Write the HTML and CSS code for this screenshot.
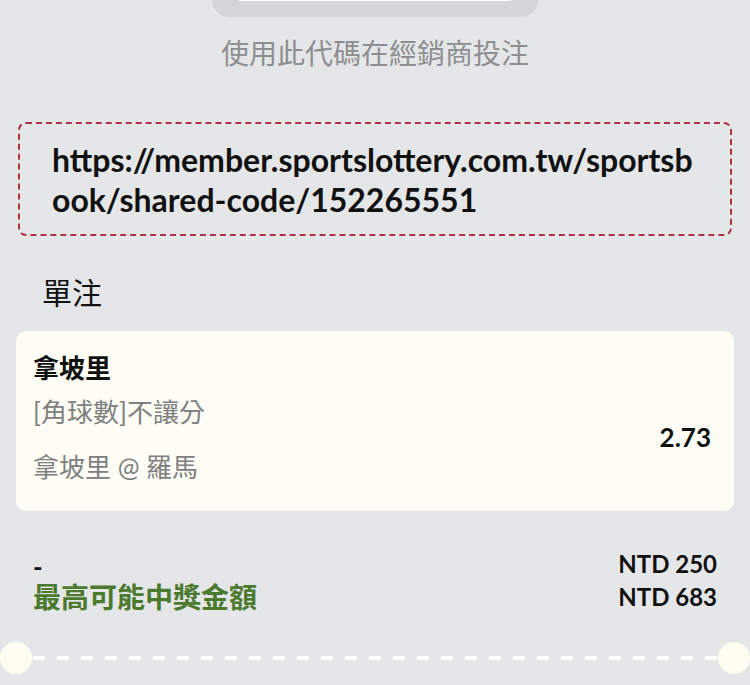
FILE: index.html
```html
<!DOCTYPE html>
<html lang="zh-Hant">
<head>
    <meta charset="UTF-8">
    <meta name="viewport" content="width=device-width, initial-scale=1.0">
    <title>投注代碼</title>
    <link rel="stylesheet" href="styles.css">
</head>
<body>
    <div class="frame">
        <div class="frame-inner"></div>
    </div>
    <p class="hint">使用此代碼在經銷商投注</p>

    <div class="link-box">https://member.sportslottery.com.tw/sportsbook/shared-code/152265551</div>

    <h2 class="section-title">單注</h2>

    <div class="bet-card">
        <div class="bet-info">
            <div class="bet-team">拿坡里</div>
            <div class="bet-market">[角球數]不讓分</div>
            <div class="bet-match">拿坡里 @ 羅馬</div>
        </div>
        <div class="bet-odds">2.73</div>
    </div>

    <div class="summary">
        <div class="summary-left">
            <div class="summary-dash">-</div>
            <div class="summary-label">最高可能中獎金額</div>
        </div>
        <div class="summary-right">
            <div class="amount">NTD 250</div>
            <div class="amount">NTD 683</div>
        </div>
    </div>

    <div class="tear">
        <span class="notch"></span>
        <span class="tear-line"></span>
        <span class="notch"></span>
    </div>
</body>
</html>
```

FILE: styles.css
```css
body {
    font-family: 'Lato', 'Noto Sans CJK TC', sans-serif;
    background-color: #e5e6e8;
    margin: 0;
    padding: 0;
    color: #111;
}
.frame {
    width: 272px;
    height: 1px;
    margin: 0 auto;
    padding: 0 27px 16px;
    background: #d4d5d9;
    border-radius: 0 0 30px 30px;
}
.frame-inner {
    height: 1px;
    background: #fff;
    border-radius: 0 0 6px 6px;
}
.hint {
    margin: 16px 0 0;
    text-align: center;
    font-size: 28px;
    line-height: 40px;
    color: #8d8e90;
}
.link-box {
    margin: 49px 18px 0;
    padding: 16px 30px 14px 32px;
    border: 2px dashed #ad3341;
    border-radius: 8px;
    font-size: 32px;
    font-weight: bold;
    line-height: 40px;
    word-break: break-all;
    color: #111;
}
.section-title {
    margin: 36px 0 0;
    padding-left: 42px;
    font-size: 30px;
    font-weight: normal;
    line-height: 40px;
}
.bet-card {
    margin: 19px 16px 0;
    padding: 19px 23px 26px 17px;
    background: #fdfdf5;
    border-radius: 10px;
    display: flex;
    justify-content: space-between;
    align-items: center;
}
.bet-team {
    font-size: 26px;
    font-weight: bold;
    line-height: 36px;
}
.bet-market {
    margin-top: 8px;
    font-size: 26px;
    line-height: 36px;
    color: #808080;
}
.bet-match {
    margin-top: 19px;
    font-size: 26px;
    line-height: 36px;
    color: #808080;
}
.bet-odds {
    margin-top: 38px;
    font-size: 26px;
    font-weight: bold;
}
.summary {
    margin-top: 36px;
    padding: 0 33px;
    display: flex;
    justify-content: space-between;
}
.summary-left {
    padding-top: 5px;
}
.summary-dash {
    font-size: 26px;
    font-weight: bold;
    line-height: 30px;
}
.summary-label {
    font-size: 28px;
    font-weight: bold;
    line-height: 30px;
    color: #4b7a2e;
}
.summary-right {
    text-align: right;
}
.amount {
    font-size: 24px;
    font-weight: bold;
    line-height: 33px;
}
.tear {
    margin-top: 29px;
    display: flex;
    align-items: center;
}
.notch {
    width: 32px;
    height: 32px;
    border-radius: 50%;
    background: #fdfdf2;
    flex-shrink: 0;
}
.tear-line {
    flex: 1;
    height: 4px;
    margin-left: 1px;
    background: repeating-linear-gradient(90deg, #fff 0 12px, transparent 12px 24px);
}
```
